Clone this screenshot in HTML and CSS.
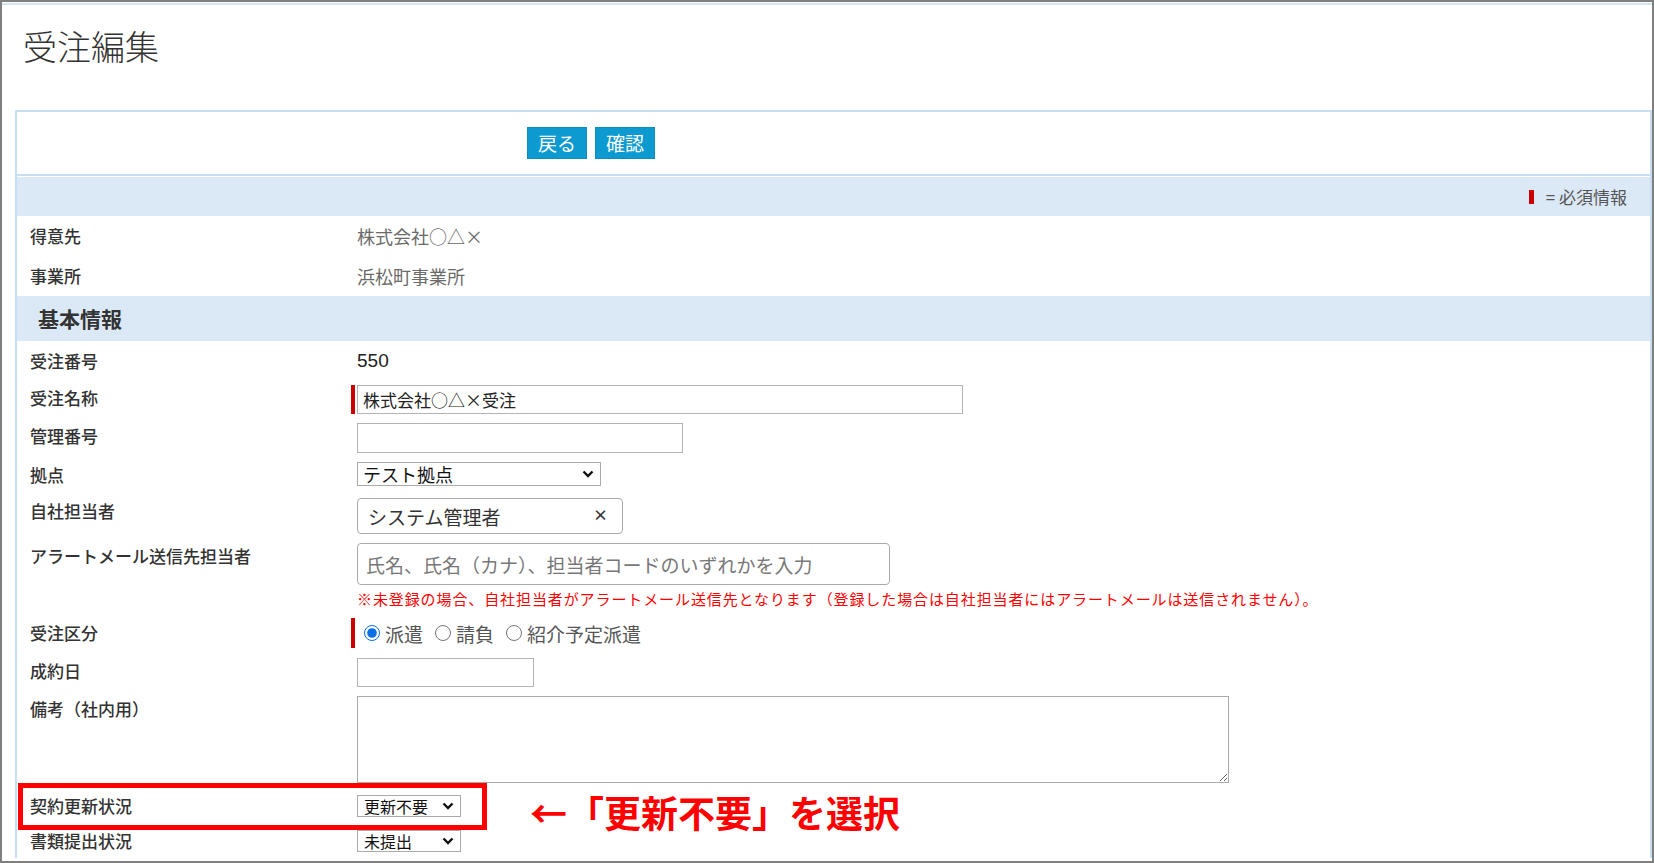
FILE: index.html
```html
<!DOCTYPE html>
<html lang="ja">
<head>
  <meta charset="utf-8">
  <title>受注編集</title>
  <link rel="stylesheet" href="styles.css">
</head>
<body>
  <div class="frame">
    <div class="top-line"></div>
    <div class="page-head">
      <h1>受注編集</h1>
    </div>

    <div class="panel">
      <div class="toolbar">
        <button class="btn">戻る</button>
        <button class="btn">確認</button>
      </div>
      <div class="legend"><span class="req-mark"></span>= 必須情報</div>

      <div class="row info">
        <div class="label">得意先</div>
        <div class="value muted">株式会社○△×</div>
      </div>
      <div class="row info">
        <div class="label">事業所</div>
        <div class="value muted">浜松町事業所</div>
      </div>

      <div class="section">基本情報</div>

      <div class="row info">
        <div class="label">受注番号</div>
        <div class="value num">550</div>
      </div>
      <div class="row field">
        <div class="label">受注名称</div>
        <div class="value"><div class="req"><input class="text w-name" value="株式会社○△×受注"></div></div>
      </div>
      <div class="row field">
        <div class="label">管理番号</div>
        <div class="value"><input class="text w-code"></div>
      </div>
      <div class="row field">
        <div class="label">拠点</div>
        <div class="value">
          <div class="select w-base">
            <span>テスト拠点</span>
            <svg width="12" height="8" viewBox="0 0 12 8"><path d="M1.5 1.5 L6 6 L10.5 1.5" fill="none" stroke="#111" stroke-width="2.4"/></svg>
          </div>
        </div>
      </div>
      <div class="row field staff">
        <div class="label">自社担当者</div>
        <div class="value">
          <div class="chip-box">
            <span>システム管理者</span>
            <span class="clear">×</span>
          </div>
        </div>
      </div>
      <div class="row field">
        <div class="label">アラートメール送信先担当者</div>
        <div class="value">
          <input class="search" placeholder="氏名、氏名（カナ）、担当者コードのいずれかを入力">
          <div class="note">※未登録の場合、自社担当者がアラートメール送信先となります（登録した場合は自社担当者にはアラートメールは送信されません）。</div>
        </div>
      </div>
      <div class="row field kind">
        <div class="label">受注区分</div>
        <div class="value">
          <div class="req">
            <div class="radios">
              <label><input type="radio" name="kind" checked>派遣</label>
              <label><input type="radio" name="kind">請負</label>
              <label><input type="radio" name="kind">紹介予定派遣</label>
            </div>
          </div>
        </div>
      </div>
      <div class="row field date">
        <div class="label">成約日</div>
        <div class="value"><input class="text w-date"></div>
      </div>
      <div class="row field">
        <div class="label">備考（社内用）</div>
        <div class="value"><textarea class="memo"></textarea></div>
      </div>
      <div class="row field sel">
        <div class="label">契約更新状況</div>
        <div class="value">
          <div class="select w-sm">
            <span>更新不要</span>
            <svg width="12" height="8" viewBox="0 0 12 8"><path d="M1.5 1.5 L6 6 L10.5 1.5" fill="none" stroke="#111" stroke-width="2.4"/></svg>
          </div>
        </div>
      </div>
      <div class="row field sel">
        <div class="label">書類提出状況</div>
        <div class="value">
          <div class="select w-sm">
            <span>未提出</span>
            <svg width="12" height="8" viewBox="0 0 12 8"><path d="M1.5 1.5 L6 6 L10.5 1.5" fill="none" stroke="#111" stroke-width="2.4"/></svg>
          </div>
        </div>
      </div>
    </div>

    <!-- 注記：枠と矢印 -->
    <div class="callout"></div>
    <div class="callout-text">←「更新不要」を選択</div>
  </div>
</body>
</html>
```

FILE: styles.css
```css
body {
  margin: 0;
  font-family: "Noto Sans CJK JP", "Noto Sans", sans-serif;
  color: #333;
  background: #fff;
}

.frame {
  position: relative;
  width: 1654px;
  height: 863px;
  box-sizing: border-box;
  border: 2px solid #7f7f7f;
  overflow: hidden;
}

.top-line {
  margin-top: 1px;
  height: 2px;
  background: #d3e5f7;
}

.page-head {
  height: 105px;
}

.page-head h1 {
  margin: 0;
  padding: 21px 0 0 21px;
  font-size: 34px;
  font-weight: 300;
  line-height: 40px;
  color: #333;
}

.panel {
  margin-left: 13px;
  border: 2px solid #c7def3;
  border-bottom: none;
}

.toolbar {
  height: 62px;
  border-bottom: 2px solid #c7def3;
  padding-left: 510px;
  display: flex;
  align-items: center;
  gap: 8px;
}

.btn {
  width: 60px;
  height: 32px;
  padding: 0;
  border: 1px solid #0b8fc2;
  background: #0c9ad0;
  color: #fff;
  font-family: inherit;
  font-size: 19px;
  line-height: 30px;
}

.legend {
  margin-top: 1px;
  height: 39px;
  background: #dbe9f7;
  display: flex;
  justify-content: flex-end;
  align-items: center;
  padding-right: 23px;
  font-size: 17px;
  color: #555;
}

.req-mark {
  width: 5px;
  height: 14px;
  background: #c00;
  margin-right: 12px;
}

.section {
  height: 45px;
  line-height: 45px;
  background: #dbe9f7;
  padding-left: 21px;
  font-size: 21px;
  font-weight: 700;
  color: #333;
}

.row {
  display: grid;
  grid-template-columns: 340px 1fr;
}

.row.info {
  height: 40px;
  align-items: center;
}

.row.field {
  align-items: start;
  padding: 4px 0 5px;
}

.row.staff { padding-top: 5px; }
.row.kind { padding-top: 4px; }
.row.kind .label { padding-top: 2px; }
.row.date { padding-top: 5px; }
.row.sel { padding: 7px 0 6px; }
.row.sel .label { line-height: 22px; }

.label {
  padding-left: 13px;
  font-size: 17px;
  font-weight: 500;
  line-height: 26px;
  color: #333;
}

.value {
  font-size: 18px;
  color: #333;
}

.value.muted {
  color: #6a6a6a;
}

.value.num {
  font-family: "Liberation Sans", Arial, sans-serif;
  font-size: 19px;
  color: #222;
}

.req {
  width: fit-content;
  margin-left: -6px;
  padding-left: 2px;
  border-left: 4px solid #c00;
}

.text {
  display: block;
  height: 29px;
  box-sizing: border-box;
  margin: 0;
  padding: 0 5px;
  border: 1px solid #b4b4b4;
  font-family: inherit;
  font-size: 17px;
  color: #222;
  outline: none;
}

.w-name { width: 606px; }
.w-code { width: 326px; height: 30px; }
.w-date { width: 177px; }

.select {
  display: flex;
  align-items: center;
  justify-content: space-between;
  box-sizing: border-box;
  padding: 0 6px 0 5px;
  border: 1px solid #aaa;
  background: #fff;
  color: #111;
}

.select.w-base {
  width: 244px;
  height: 24px;
  font-size: 18px;
}

.select.w-sm {
  width: 104px;
  height: 22px;
  padding-left: 6px;
  font-size: 16px;
}

.chip-box {
  width: 266px;
  height: 36px;
  box-sizing: border-box;
  display: flex;
  align-items: center;
  justify-content: space-between;
  padding: 0 14px 0 10px;
  border: 1px solid #aaa;
  border-radius: 4px;
  font-size: 19px;
  color: #333;
}

.chip-box .clear {
  font-size: 15px;
  font-weight: 700;
  margin-top: -4px;
}

.search {
  display: block;
  width: 533px;
  height: 42px;
  box-sizing: border-box;
  margin: 0;
  padding: 0 8px;
  border: 1px solid #aaa;
  border-radius: 4px;
  font-family: inherit;
  font-size: 19px;
  outline: none;
}

.search::placeholder {
  color: #777;
}

.note {
  margin-top: 4px;
  font-size: 15px;
  line-height: 20px;
  letter-spacing: 0.9px;
  color: #f00;
}

.radios {
  display: flex;
  align-items: center;
  height: 30px;
  padding-left: 7px;
  font-size: 19px;
  color: #555;
}

.radios label {
  display: flex;
  align-items: center;
  margin-right: 12px;
}

.radios input {
  width: 16px;
  height: 16px;
  margin: 0 5px 0 0;
  accent-color: #0a6fe6;
}

.memo {
  display: block;
  width: 872px;
  height: 87px;
  box-sizing: border-box;
  margin: 0;
  border: 1px solid #aaa;
  font-family: inherit;
}

/* 注記 */
.callout {
  position: absolute;
  left: 16px;
  top: 781px;
  width: 469px;
  height: 47px;
  box-sizing: border-box;
  border: 5px solid #f00;
}

.callout-text {
  position: absolute;
  left: 528px;
  top: 792px;
  font-size: 37px;
  font-weight: 700;
  line-height: 37px;
  color: #f00;
  white-space: nowrap;
}
```
